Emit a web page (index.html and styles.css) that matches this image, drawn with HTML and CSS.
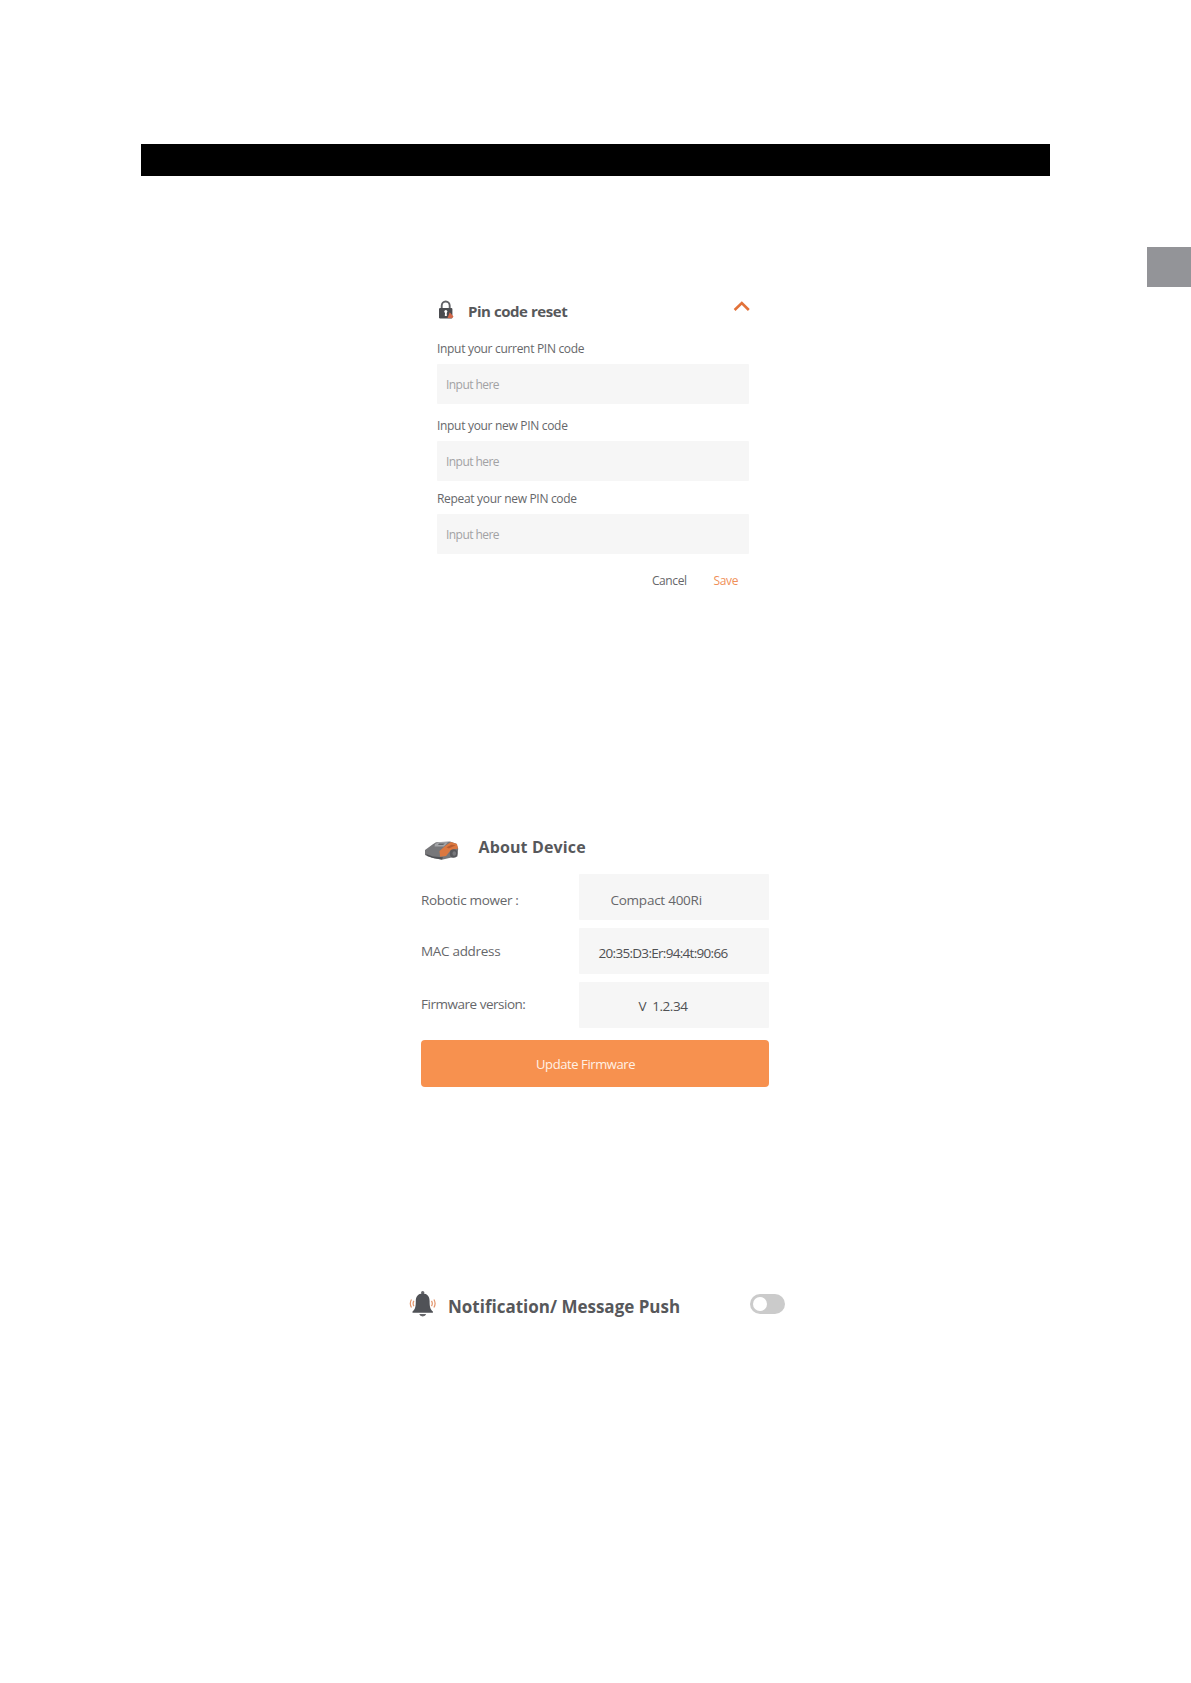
FILE: index.html
```html
<!DOCTYPE html>
<html lang="en">
<head>
<meta charset="utf-8">
<title>Device settings</title>
<link rel="stylesheet" href="styles.css">
</head>
<body>
<header class="banner"></header>
<div class="side-tab"></div>

<section class="pin">
  <div class="pin-head">
    <svg class="lock" width="16" height="20" viewBox="0 0 16 20">
      <path d="M3.700 9V5.800a4 4.300 0 0 1 8 0V9" fill="none" stroke="#626367" stroke-width="1.900"/>
      <rect x="1" y="7.900" width="13.400" height="10.600" rx="1.200" fill="#4b4c50"/>
      <circle cx="7.800" cy="11.600" r="1.500" fill="#fff"/>
      <path d="M7.100 12h1.500l.3 4H6.800z" fill="#fff"/>
      <path d="M11.700 12.200l3.800 4.200-1.500 1.900-4.400-.2z" fill="#d4694a"/>
    </svg>
    <h2 class="pin-title">Pin code reset</h2>
    <svg class="chevron" width="17" height="12" viewBox="0 0 17 12">
      <path d="M1.600 10L8.800 3l7 7" fill="none" stroke="#e2723a" stroke-width="2.600"/>
    </svg>
  </div>
  <label class="label l1">Input your current PIN code</label>
  <div class="input">Input here</div>
  <label class="label l2">Input your new PIN code</label>
  <div class="input">Input here</div>
  <label class="label l3">Repeat your new PIN code</label>
  <div class="input">Input here</div>
  <div class="actions"><span class="cancel">Cancel</span><span class="save">Save</span></div>
</section>

<section class="about">
  <div class="about-head">
    <svg class="mower" width="36" height="21" viewBox="0 0 36 21">
      <path d="M1 10L8.500 4.400 12 2.200 26 1.500l6.500 2.300 1.700 4.700-.8 8-7 1.200-8.600 2.100L8 17.700 1 15z" fill="#77777a"/>
      <path d="M2 14l7 2.500 10 .7-1 2.200-8-1.200-7-2.300z" fill="#505155"/>
      <path d="M11 4l4-2 9 .2-4 4.300-9.500-.1z" fill="#a4a5a8"/>
      <path d="M15 3.400h6l-2 1.700h-5z" fill="#636467"/>
      <path d="M15.500 11L22 5.200l5-3.300 6 2 1 4.600-7.400 1.800-4.500 5.600-6 .9z" fill="#dc7840"/>
      <path d="M22.500 7.200l5-2.500 4.300.5-7 3.200z" fill="#b75c31"/>
      <ellipse cx="29.600" cy="13.500" rx="3.800" ry="4.200" fill="#57585c"/>
      <ellipse cx="30.300" cy="13.500" rx="1.800" ry="2.300" fill="#77787c"/>
    </svg>
    <h2 class="about-title">About Device</h2>
  </div>
  <div class="row"><span class="key k1">Robotic mower :</span><span class="value v1">Compact 400Ri</span></div>
  <div class="row"><span class="key k2">MAC address</span><span class="value v2">20:35:D3:Er:94:4t:90:66</span></div>
  <div class="row"><span class="key k3">Firmware version:</span><span class="value v3">V&nbsp; 1.2.34</span></div>
  <div class="update">Update Firmware</div>
</section>

<section class="push">
  <svg class="bell" width="28" height="28" viewBox="0 0 28 28">
    <circle cx="13.700" cy="2.800" r="1.700" fill="#66676b"/>
    <path d="M13.700 3.500c4.800 0 6.900 3.300 6.900 7.500 0 6 .8 8.600 3.300 10.400v1.300H3.500v-1.300C6 19.600 6.800 17 6.800 11c0-4.200 2.100-7.500 6.900-7.500z" fill="#505257"/>
    <path d="M10.200 24h7a3.600 3.200 0 0 1-7 0z" fill="#66676b"/>
    <path d="M4.900 10.900q-1.600 2.600 0 5.200M22.500 10.900q1.600 2.600 0 5.200M2.500 9.500q-2.400 4 0 8M24.900 9.500q2.400 4 0 8" fill="none" stroke="#e2946b" stroke-width="1.200"/>
  </svg>
  <h2 class="push-title">Notification/ Message Push</h2>
  <span class="toggle"><span class="knob"></span></span>
</section>
</body>
</html>
```
FILE: styles.css
```css
* { box-sizing: border-box; }
body {
  margin: 0;
  height: 1683px;
  padding-top: 144px;
  background: #fff;
  font-family: "Open Sans", "Noto Sans", sans-serif;
  color: #66676a;
  white-space: nowrap;
}
h2 { margin: 0; font-weight: 700; color: #57585b; line-height: 24px; }
svg { display: block; flex: none; }

.banner { width: 909px; height: 32px; margin-left: 141px; background: #000; }
.side-tab { width: 44px; height: 40px; margin: 71px 0 0 auto; background: #939498; }

.pin { width: 312px; margin: 12px 0 0 437px; }
.pin-head { display: flex; height: 40px; }
.lock { margin: 1px 14px 0 1px; }
.pin-title { font-size: 15px; letter-spacing: -0.45px; }
.chevron { margin: 1px -1px 0 auto; }
.label { display: block; height: 25px; font-size: 12px; line-height: 20px; letter-spacing: -0.31px; }
.l2 { margin-top: 12px; }
.l3 { margin-top: 8px; }
.input {
  height: 40px;
  padding: 11px 9px;
  border-radius: 1px;
  background: #f6f6f6;
  color: #a2a2a4;
  font-size: 12px;
  line-height: 20px;
  letter-spacing: -0.55px;
}
.actions { display: flex; justify-content: flex-end; gap: 27px; margin-top: 17px; padding-right: 11px; font-size: 12px; line-height: 20px; letter-spacing: -0.4px; }
.save { color: #f09058; }

.about { width: 348px; margin: 244px 0 0 420.500px; }
.about-head { display: flex; height: 39px; }
.mower { margin: 5px 19px 0 3px; }
.about-title { font-size: 16px; letter-spacing: 0.13px; }
.row { display: flex; justify-content: space-between; height: 46px; margin-bottom: 8px; font-size: 13.500px; }
.key { padding: 16px 0 0 0.500px; line-height: 20px; letter-spacing: -0.31px; }
.k2 { padding-top: 13px; }
.k3 { padding-top: 12px; letter-spacing: -0.48px; }
.value { width: 190px; padding-top: 16px; background: #f6f6f6; border-radius: 1px; line-height: 20px; }
.v1 { padding-left: 32px; letter-spacing: -0.25px; }
.v2 { padding: 15px 0 0 20px; letter-spacing: -0.7px; color: #4f5053; }
.v3 { padding: 14px 0 0 60px; letter-spacing: -0.45px; color: #4f5053; }
.update { height: 47px; margin-top: 12px; padding: 14px 0 0 115.500px; border-radius: 4px; background: #f7914f; color: #fff1e6; font-size: 13px; line-height: 20px; letter-spacing: -0.4px; }

.push { display: flex; width: 376px; margin: 203px 0 0 409px; }
.bell { margin-right: 11px; }
.push-title { margin-top: 5px; font-size: 17px; }
.toggle { width: 35px; height: 20px; margin: 4px 0 0 auto; padding: 3px; border-radius: 10px; background: #cbcbcb; }
.knob { display: block; width: 14px; height: 14px; border-radius: 50%; background: #fff; }
```
